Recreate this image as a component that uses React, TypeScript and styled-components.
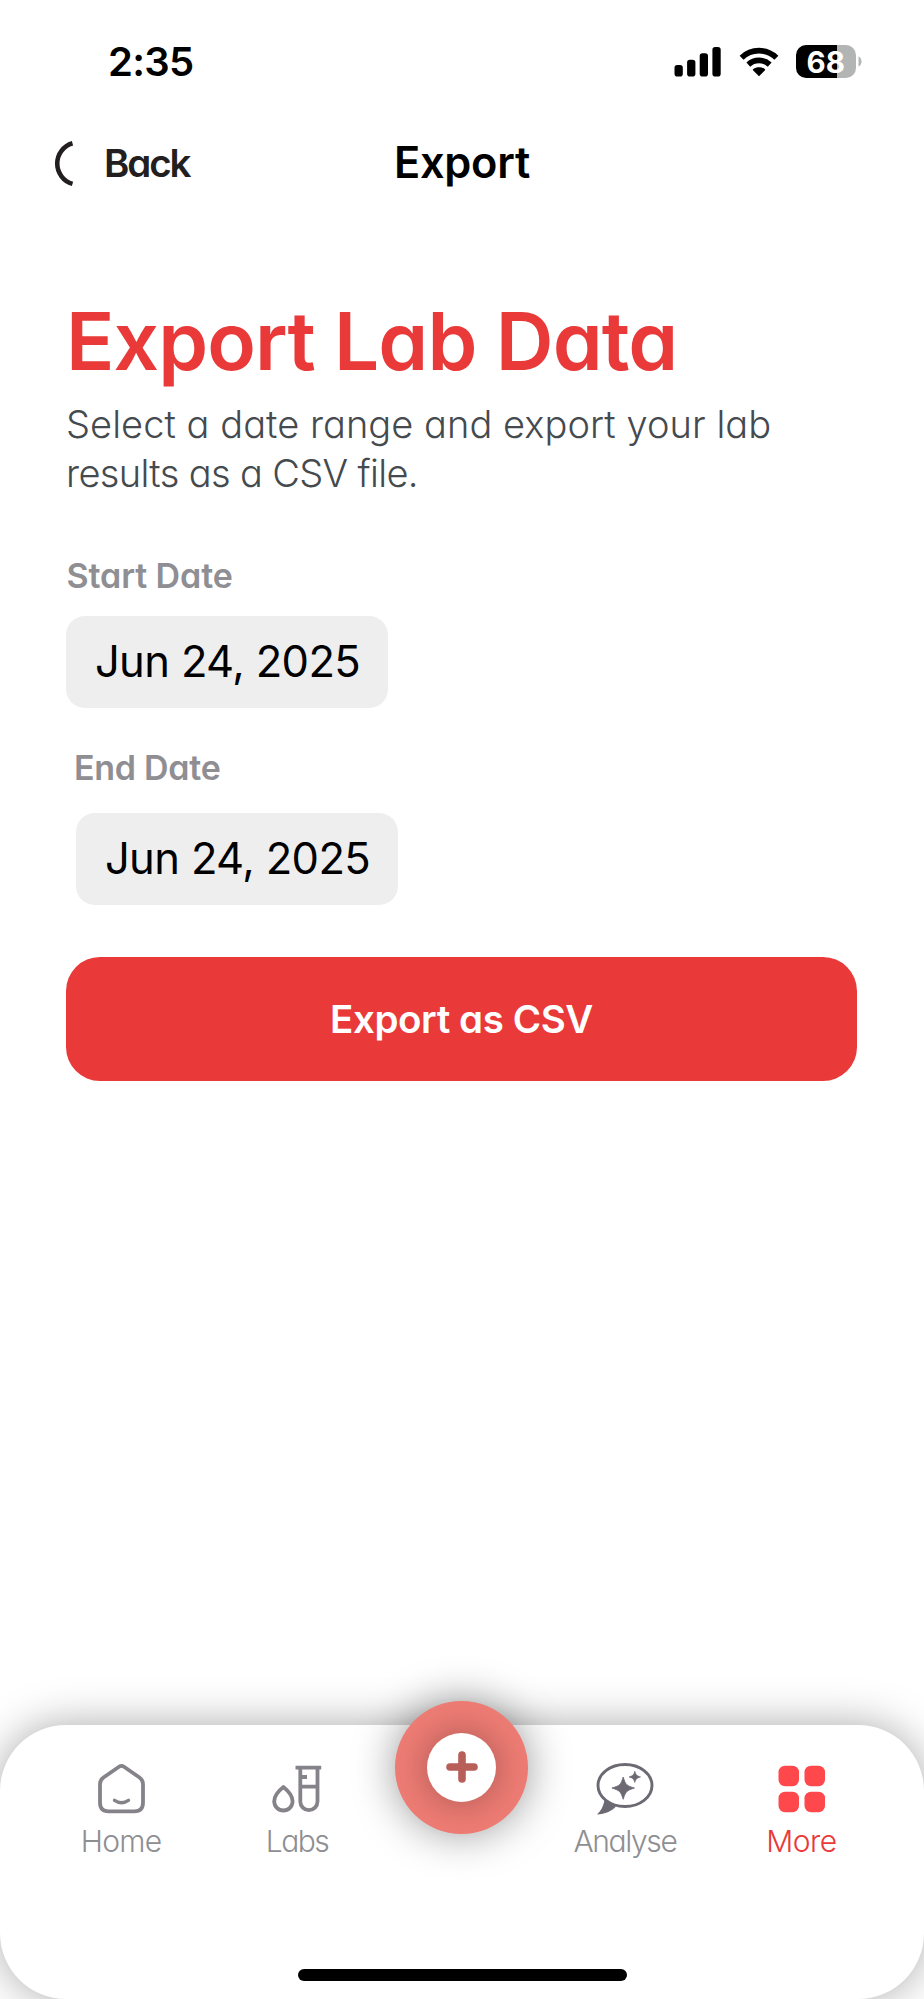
import React from "react";
import styled, { createGlobalStyle } from "styled-components";

const GlobalStyle = createGlobalStyle`
  * { box-sizing: border-box; }
  html, body { margin: 0; padding: 0; background: #fff; overflow: hidden; }
  body { font-family: Inter, "Liberation Sans", sans-serif; color: #000; }
  svg { display: block; flex: none; }
  button { border: 0; background: none; padding: 0; margin: 0; font: inherit; color: inherit; }
`;

const Screen = styled.div`
  display: flex;
  flex-direction: column;
  width: 924px;
  height: 1999px;
  background: #fff;
  overflow: hidden;
`;

const StatusBar = styled.header`
  display: flex;
  align-items: center;
  justify-content: space-between;
  height: 123px;
  padding: 0 62.5px 0 108px;
`;

const Clock = styled.time`
  font-size: 40px;
  line-height: 48px;
  font-weight: 600;
  letter-spacing: -0.71px;
`;

const StatusIcons = styled.div`
  display: flex;
  align-items: center;
`;

const SignalIcon = styled.svg`
  margin-right: 16.5px;
`;

const WifiIcon = styled.svg`
  margin-right: 17px;
`;

const Battery = styled.div`
  display: flex;
  align-items: center;
  gap: 1.5px;
`;

const BatteryBody = styled.div`
  display: flex;
  align-items: center;
  justify-content: center;
  width: 60.5px;
  height: 32.5px;
  border-radius: 10px;
  background: linear-gradient(to right, #000 41px, #b3b5b4 41px);
  color: #fff;
  font-size: 29.5px;
  line-height: 32px;
  font-weight: 700;
`;

const NavBar = styled.nav`
  display: grid;
  grid-template-columns: 1fr auto 1fr;
  align-items: center;
  height: 78px;
  padding: 0 52px;
`;

const BackButton = styled.button`
  display: flex;
  align-items: center;
  gap: 28px;
  padding-top: 2px;
  color: #231f20;
  font-size: 38.5px;
  line-height: 46px;
  font-weight: 600;
  letter-spacing: -2.1px;
  font-feature-settings: "cv11";
`;

const NavTitle = styled.h2`
  margin: 0;
  font-size: 43.3px;
  line-height: 52px;
  font-weight: 600;
  letter-spacing: -0.24px;
`;

const Content = styled.main`
  display: flex;
  flex-direction: column;
  align-items: flex-start;
  flex: 1;
  padding: 100px 67px 0 66px;
  font-feature-settings: "cv11";
`;

const Heading = styled.h1`
  margin: 0 0 19px;
  color: #e93939;
  font-size: 80px;
  line-height: 80px;
  font-weight: 600;
  letter-spacing: -0.88px;
  white-space: nowrap;
`;

const Description = styled.p`
  display: flex;
  flex-direction: column;
  margin: 0 0 58px;
  color: #454a4f;
  font-size: 38px;
  line-height: 49px;
  font-weight: 300;
  white-space: nowrap;
`;

const Line = styled.span<{ $spacing: number }>`
  letter-spacing: ${(p) => p.$spacing}px;
`;

const Field = styled.div<{ $indent?: number; $gap: number }>`
  display: flex;
  flex-direction: column;
  align-items: flex-start;
  gap: ${(p) => p.$gap}px;
  margin-left: ${(p) => p.$indent ?? 0}px;
`;

const FieldLabel = styled.label<{ $spacing: number }>`
  padding-left: 0.5px;
  color: #8e8e93;
  font-size: 34px;
  line-height: 40px;
  font-weight: 600;
  letter-spacing: ${(p) => p.$spacing}px;
`;

const DateButton = styled.button<{ $shift?: number }>`
  display: flex;
  align-items: center;
  justify-content: center;
  width: 322px;
  height: 92px;
  margin-left: ${(p) => p.$shift ?? 0}px;
  padding: 0 0 2px 1px;
  border-radius: 19px;
  background: #eeeeef;
  color: #000;
  font-size: 43.5px;
  line-height: 52px;
  letter-spacing: -0.62px;
  font-feature-settings: normal;
`;

const Spacer = styled.div<{ $size: number }>`
  height: ${(p) => p.$size}px;
`;

const ExportButton = styled.button`
  align-self: stretch;
  height: 124.5px;
  border-radius: 34px;
  background: #e93939;
  color: #fff;
  font-size: 38.5px;
  line-height: 46px;
  font-weight: 600;
  letter-spacing: -0.42px;
`;

const TabBar = styled.footer`
  display: flex;
  flex-direction: column;
  align-items: center;
  justify-content: space-between;
  height: 274.5px;
  padding-bottom: 18px;
  border-radius: 66px;
  background: #fff;
  box-shadow: 0 0 44px rgba(0, 0, 0, 0.34);
`;

const Tabs = styled.div`
  display: grid;
  grid-template-columns: 176px 176px 153px 174px 179px;
`;

const Tab = styled.button<{ $active?: boolean; $spacing: number }>`
  display: flex;
  flex-direction: column;
  align-items: center;
  gap: 7.5px;
  padding-top: 38.5px;
  color: ${(p) => (p.$active ? "#e93939" : "#8e8e93")};
  font-size: 30px;
  line-height: 36px;
  font-weight: 300;
  letter-spacing: ${(p) => p.$spacing}px;
  font-feature-settings: "cv11";
`;

const AddButton = styled.button`
  display: flex;
  align-items: center;
  justify-content: center;
  justify-self: center;
  width: 133px;
  height: 133px;
  margin-top: -24px;
  border-radius: 50%;
  background: #ee7c74;
  box-shadow: 0 0 44px rgba(0, 0, 0, 0.4);
`;

const AddDisc = styled.span`
  display: flex;
  align-items: center;
  justify-content: center;
  width: 69px;
  height: 69px;
  border-radius: 50%;
  background: #fff;
  box-shadow: 0 0 36px rgba(0, 0, 0, 0.3);
`;

const HomeIndicator = styled.div`
  width: 329px;
  height: 12.5px;
  border-radius: 7px;
  background: #000;
`;

const ICON_GRAY = "#86828a";
const BUBBLE_GRAY = "#6d6973";

const HomeIcon = () => (
  <svg width="58" height="52" viewBox="0 0 58 52" fill="none" stroke={ICON_GRAY} strokeWidth="3.8" strokeLinecap="round" strokeLinejoin="round">
    <path d="M27 3.700Q29.500 2 32 3.700L47.500 14.500Q51 17 51 21V39.500Q51 48.300 42.500 48.300H16.500Q8 48.300 8 39.500V21Q8 17 11.500 14.500Z" />
    <path d="M22.500 37.300Q29.500 42 36.500 37.300" strokeWidth="3.400" />
  </svg>
);

const LabsIcon = () => (
  <svg width="54" height="52" viewBox="0 0 54 52" fill="none" stroke={ICON_GRAY} strokeWidth="3.8">
    <path d="M13.400 24C9 27.500 4.200 32.500 4.200 38.300A9.200 9.200 0 0 0 22.600 38.300C22.600 32.500 17.800 27.500 13.400 24Z" strokeLinejoin="round" />
    <path d="M25.500 4.600H51.200M30.300 4.600V38.500A8.600 8.600 0 0 0 47.500 38.500V4.600M30.300 23.700H47.500M30.300 14H37" />
  </svg>
);

const AnalyseIcon = () => (
  <svg width="58" height="52" viewBox="0 0 58 52">
    <ellipse cx="29" cy="22.500" rx="27" ry="21" fill="none" stroke={BUBBLE_GRAY} strokeWidth="2.900" />
    <path d="M8.500 37C7.500 43 5 48 1 51.500C9 51 15.500 48.500 20 43.500C15.500 42 11.500 39.500 8.500 37Z" fill={BUBBLE_GRAY} />
    <path d="M27.200 14C29.800 22 30.300 22.500 38.500 25C30.300 27.800 29.800 28.300 27.200 36.300C24.600 28.300 24.100 27.800 15.900 25C24.100 22.500 24.600 22 27.200 14Z" fill={BUBBLE_GRAY} stroke={BUBBLE_GRAY} strokeWidth="0.800" strokeLinejoin="round" />
    <path d="M38.800 8.300C40.200 12.300 40.600 12.700 44.600 13.900C40.600 15.200 40.200 15.600 38.800 19.600C37.400 15.600 37 15.200 33 13.900C37 12.700 37.400 12.300 38.800 8.300Z" fill={BUBBLE_GRAY} stroke={BUBBLE_GRAY} strokeWidth="0.600" strokeLinejoin="round" />
  </svg>
);

const MoreIcon = () => (
  <svg width="50" height="52" viewBox="0 0 50 52" fill="#ff484b">
    <rect x="1.500" y="2.700" width="20.500" height="20.500" rx="6.500" />
    <rect x="27.500" y="2.700" width="20.500" height="20.500" rx="6.500" />
    <rect x="1.500" y="28.700" width="20.500" height="20.500" rx="6.500" />
    <rect x="27.500" y="28.700" width="20.500" height="20.500" rx="6.500" />
  </svg>
);

export default function App() {
  return (
    <Screen>
      <GlobalStyle />
      <StatusBar>
        <Clock>2:35</Clock>
        <StatusIcons>
          <SignalIcon width="48" height="30" viewBox="0 0 48 30">
            <rect x="0.500" y="18" width="8.300" height="11.500" rx="2.800" />
            <rect x="13.100" y="12.700" width="8.300" height="16.800" rx="2.800" />
            <rect x="25.700" y="6.300" width="8.300" height="23.200" rx="2.800" />
            <rect x="38.400" y="0" width="8.300" height="29.500" rx="2.800" />
          </SignalIcon>
          <WifiIcon width="40" height="30" viewBox="0 0 40 30">
            <path d="M20 29.300L14 23.200Q13.600 22.500 14.300 22C17.500 19.500 22.500 19.500 25.700 22Q26.400 22.500 26 23.200Z" />
            <path d="M9.300 17.600A15.600 15.600 0 0 1 30.700 17.600" fill="none" stroke="#000" strokeWidth="5.600" />
            <path d="M2.600 10.700A25 25 0 0 1 37.400 10.700" fill="none" stroke="#000" strokeWidth="5.600" />
          </WifiIcon>
          <Battery>
            <BatteryBody>68</BatteryBody>
            <svg width="4" height="11" viewBox="0 0 4 11">
              <path d="M0.500 0.500C4.500 2 4.500 9 0.500 10.500Z" fill="#b3b5b4" />
            </svg>
          </Battery>
        </StatusIcons>
      </StatusBar>

      <NavBar>
        <BackButton>
          <svg width="24" height="47" viewBox="0 0 24 47" fill="none" stroke="#231f20" strokeWidth="4.600">
            <path d="M20.500 3.200A21.200 21.200 0 0 0 20.500 43.900" />
          </svg>
          Back
        </BackButton>
        <NavTitle>Export</NavTitle>
      </NavBar>

      <Content>
        <Heading>Export Lab Data</Heading>
        <Description>
          <Line $spacing={0.05}>Select a date range and export your lab</Line>
          <Line $spacing={-0.65}>results as a CSV file.</Line>
        </Description>
        <Field $gap={20}>
          <FieldLabel $spacing={-0.1}>Start Date</FieldLabel>
          <DateButton>Jun 24, 2025</DateButton>
        </Field>
        <Spacer $size={39.5} />
        <Field $gap={25.5} $indent={7.5}>
          <FieldLabel $spacing={-0.28}>End Date</FieldLabel>
          <DateButton $shift={2.5}>Jun 24, 2025</DateButton>
        </Field>
        <Spacer $size={51.5} />
        <ExportButton>Export as CSV</ExportButton>
      </Content>

      <TabBar>
        <Tabs>
          <Tab $spacing={-0.72}>
            <HomeIcon />
            Home
          </Tab>
          <Tab $spacing={-1.52}>
            <LabsIcon />
            Labs
          </Tab>
          <AddButton aria-label="Add">
            <AddDisc>
              <svg width="32" height="32" viewBox="0 0 32 32" fill="none" stroke="#b95f59" strokeWidth="7.600" strokeLinecap="round">
                <path d="M16 4V28M4 16H28" />
              </svg>
            </AddDisc>
          </AddButton>
          <Tab $spacing={-1.37}>
            <AnalyseIcon />
            Analyse
          </Tab>
          <Tab $active $spacing={-0.53}>
            <MoreIcon />
            More
          </Tab>
        </Tabs>
        <HomeIndicator />
      </TabBar>
    </Screen>
  );
}
